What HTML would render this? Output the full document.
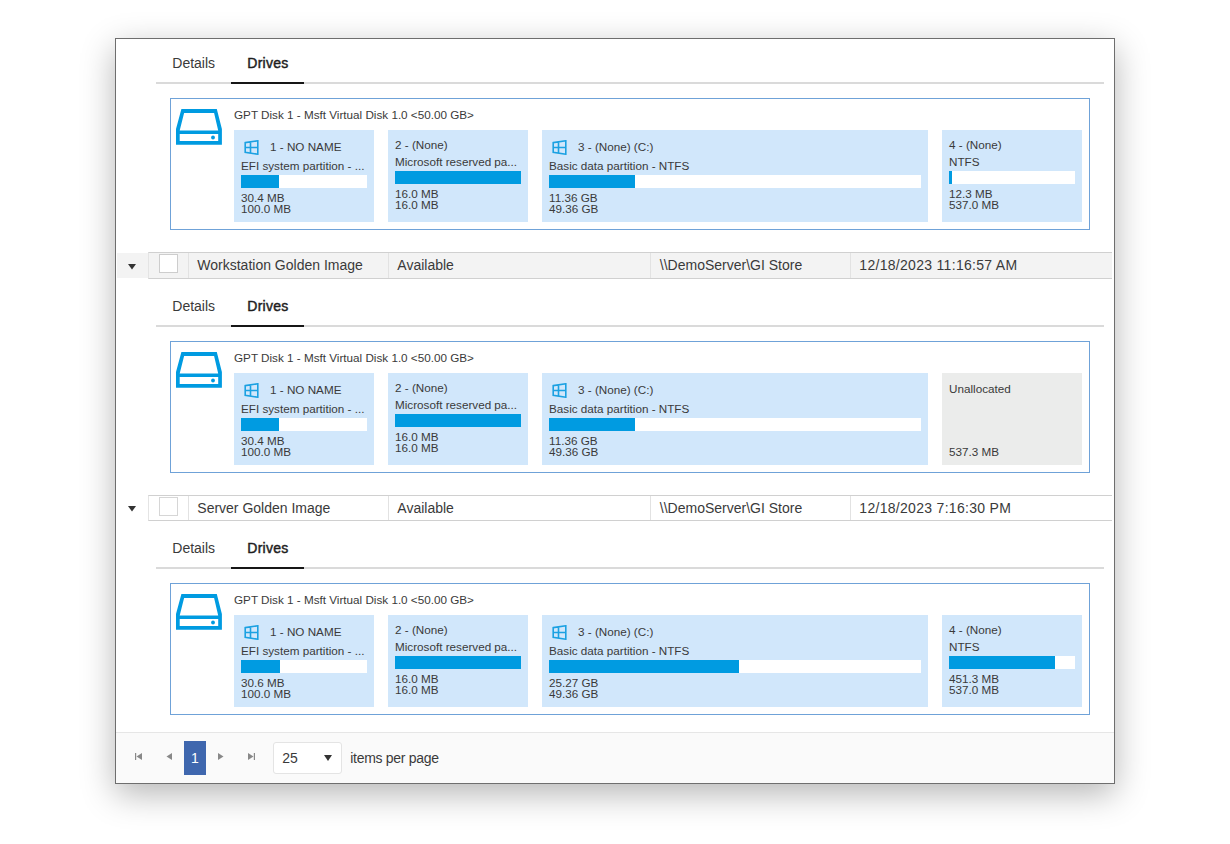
<!DOCTYPE html>
<html><head><meta charset="utf-8"><style>
html,body{margin:0;padding:0;background:#fff;width:1230px;height:844px;overflow:hidden;position:relative}
body{font-family:"Liberation Sans",sans-serif;color:#3a3a3a}
.a{position:absolute;box-sizing:content-box}
.t{position:absolute;height:0;line-height:0;white-space:pre}
.t span{display:inline-block;line-height:0;vertical-align:baseline}
.win{left:115px;top:38px;width:998px;height:744px;border:1px solid #6e6e6e;background:#fff;box-shadow:0 10px 32px rgba(0,0,0,.29)}
</style></head><body>
<div class="a win"></div>
<div class="t" style="left:172.3px;top:63px;font-size:14px;color:#3a3a3a;font-weight:normal;"><span>Details</span></div>
<div class="t" style="left:247.3px;top:63px;font-size:14px;color:#1e1e1e;font-weight:normal;-webkit-text-stroke:0.45px #1e1e1e;letter-spacing:0.25px"><span>Drives</span></div>
<div class="a" style="left:156px;top:82px;width:948px;height:2px;background:#dadada"></div>
<div class="a" style="left:231px;top:82px;width:73px;height:2px;background:#161616"></div>
<div class="a" style="left:170px;top:98px;width:918px;height:130px;border:1px solid #6fa2d8"></div>
<svg class="a" style="left:176px;top:109px" width="46" height="36" viewBox="0 0 46 36"><path fill-rule="evenodd" fill="#009be1" d="M5.4 0H40.8L45.9 20V35.8H0V20Z M8.1 4H38.1L42.2 21.4H3.7Z M3.7 25H42.2V32H3.7Z"/><circle cx="37" cy="28.5" r="1.9" fill="#009be1"/></svg>
<div class="t" style="left:234px;top:115px;font-size:11.7px;color:#3a3a3a;font-weight:normal;"><span>GPT Disk 1 - Msft Virtual Disk 1.0 &lt;50.00 GB&gt;</span></div>
<div class="a" style="left:234px;top:130px;width:140px;height:92px;background:#d1e7fb"></div>
<svg class="a" style="left:244px;top:140px" width="15" height="15" viewBox="0 0 15 15"><path d="M1.2 2.6 L13.8 0.8 L13.8 14.2 L1.2 12.4 Z M1.2 7.5 H13.8 M6.5 1.8 V13.2" fill="none" stroke="#1ba1e2" stroke-width="1.6"/></svg>
<div class="t" style="left:270px;top:147px;font-size:11.7px;color:#3a3a3a;font-weight:normal;"><span>1 - NO NAME</span></div>
<div class="t" style="left:241px;top:166px;font-size:11.7px;color:#3a3a3a;font-weight:normal;"><span>EFI system partition - ...</span></div>
<div class="a" style="left:241px;top:175px;width:126px;height:13px;background:#fff"></div>
<div class="a" style="left:241px;top:175px;width:38px;height:13px;background:#009be1"></div>
<div class="t" style="left:241px;top:198px;font-size:11.7px;color:#3a3a3a;font-weight:normal;"><span>30.4 MB</span></div>
<div class="t" style="left:241px;top:209px;font-size:11.7px;color:#3a3a3a;font-weight:normal;"><span>100.0 MB</span></div>
<div class="a" style="left:388px;top:130px;width:140px;height:92px;background:#d1e7fb"></div>
<div class="t" style="left:395px;top:145px;font-size:11.7px;color:#3a3a3a;font-weight:normal;"><span>2 - (None)</span></div>
<div class="t" style="left:395px;top:162px;font-size:11.7px;color:#3a3a3a;font-weight:normal;"><span>Microsoft reserved pa...</span></div>
<div class="a" style="left:395px;top:171px;width:126px;height:13px;background:#fff"></div>
<div class="a" style="left:395px;top:171px;width:126px;height:13px;background:#009be1"></div>
<div class="t" style="left:395px;top:194px;font-size:11.7px;color:#3a3a3a;font-weight:normal;"><span>16.0 MB</span></div>
<div class="t" style="left:395px;top:205px;font-size:11.7px;color:#3a3a3a;font-weight:normal;"><span>16.0 MB</span></div>
<div class="a" style="left:542px;top:130px;width:386px;height:92px;background:#d1e7fb"></div>
<svg class="a" style="left:552px;top:140px" width="15" height="15" viewBox="0 0 15 15"><path d="M1.2 2.6 L13.8 0.8 L13.8 14.2 L1.2 12.4 Z M1.2 7.5 H13.8 M6.5 1.8 V13.2" fill="none" stroke="#1ba1e2" stroke-width="1.6"/></svg>
<div class="t" style="left:578px;top:147px;font-size:11.7px;color:#3a3a3a;font-weight:normal;"><span>3 - (None) (C:)</span></div>
<div class="t" style="left:549px;top:166px;font-size:11.7px;color:#3a3a3a;font-weight:normal;"><span>Basic data partition - NTFS</span></div>
<div class="a" style="left:549px;top:175px;width:372px;height:13px;background:#fff"></div>
<div class="a" style="left:549px;top:175px;width:86px;height:13px;background:#009be1"></div>
<div class="t" style="left:549px;top:198px;font-size:11.7px;color:#3a3a3a;font-weight:normal;"><span>11.36 GB</span></div>
<div class="t" style="left:549px;top:209px;font-size:11.7px;color:#3a3a3a;font-weight:normal;"><span>49.36 GB</span></div>
<div class="a" style="left:942px;top:130px;width:140px;height:92px;background:#d1e7fb"></div>
<div class="t" style="left:949px;top:145px;font-size:11.7px;color:#3a3a3a;font-weight:normal;"><span>4 - (None)</span></div>
<div class="t" style="left:949px;top:162px;font-size:11.7px;color:#3a3a3a;font-weight:normal;"><span>NTFS</span></div>
<div class="a" style="left:949px;top:171px;width:126px;height:13px;background:#fff"></div>
<div class="a" style="left:949px;top:171px;width:3px;height:13px;background:#009be1"></div>
<div class="t" style="left:949px;top:194px;font-size:11.7px;color:#3a3a3a;font-weight:normal;"><span>12.3 MB</span></div>
<div class="t" style="left:949px;top:205px;font-size:11.7px;color:#3a3a3a;font-weight:normal;"><span>537.0 MB</span></div>
<div class="a" style="left:117px;top:253px;width:995px;height:25px;background:#f3f3f3"></div>
<div class="a" style="left:148px;top:252px;width:963px;height:25px;border-top:1px solid #d0d0d0;border-bottom:1px solid #d0d0d0;border-left:1px solid #e4e4e4"></div>
<div class="a" style="left:188px;top:253px;width:1px;height:25px;background:#e2e2e2"></div>
<div class="a" style="left:388px;top:253px;width:1px;height:25px;background:#e2e2e2"></div>
<div class="a" style="left:650px;top:253px;width:1px;height:25px;background:#e2e2e2"></div>
<div class="a" style="left:850px;top:253px;width:1px;height:25px;background:#e2e2e2"></div>
<div class="a" style="left:159px;top:254px;width:17px;height:17px;background:#fff;border:1px solid #cdcdcd"></div>
<svg class="a" style="left:128px;top:264px" width="8" height="6" viewBox="0 0 8 6"><path d="M0 0H8L4 5.6Z" fill="#333"/></svg>
<div class="t" style="left:197.3px;top:265px;font-size:14px;color:#3a3a3a;font-weight:normal;"><span>Workstation Golden Image</span></div>
<div class="t" style="left:397.3px;top:265px;font-size:14px;color:#3a3a3a;font-weight:normal;"><span>Available</span></div>
<div class="t" style="left:659.8px;top:265px;font-size:14px;color:#3a3a3a;font-weight:normal;"><span>\\DemoServer\GI Store</span></div>
<div class="t" style="left:859.3px;top:265px;font-size:14px;color:#3a3a3a;font-weight:normal;letter-spacing:0.3px"><span>12/18/2023 11:16:57 AM</span></div>
<div class="t" style="left:172.3px;top:306px;font-size:14px;color:#3a3a3a;font-weight:normal;"><span>Details</span></div>
<div class="t" style="left:247.3px;top:306px;font-size:14px;color:#1e1e1e;font-weight:normal;-webkit-text-stroke:0.45px #1e1e1e;letter-spacing:0.25px"><span>Drives</span></div>
<div class="a" style="left:156px;top:325px;width:948px;height:2px;background:#dadada"></div>
<div class="a" style="left:231px;top:325px;width:73px;height:2px;background:#161616"></div>
<div class="a" style="left:170px;top:341px;width:918px;height:130px;border:1px solid #6fa2d8"></div>
<svg class="a" style="left:176px;top:352px" width="46" height="36" viewBox="0 0 46 36"><path fill-rule="evenodd" fill="#009be1" d="M5.4 0H40.8L45.9 20V35.8H0V20Z M8.1 4H38.1L42.2 21.4H3.7Z M3.7 25H42.2V32H3.7Z"/><circle cx="37" cy="28.5" r="1.9" fill="#009be1"/></svg>
<div class="t" style="left:234px;top:358px;font-size:11.7px;color:#3a3a3a;font-weight:normal;"><span>GPT Disk 1 - Msft Virtual Disk 1.0 &lt;50.00 GB&gt;</span></div>
<div class="a" style="left:234px;top:373px;width:140px;height:92px;background:#d1e7fb"></div>
<svg class="a" style="left:244px;top:383px" width="15" height="15" viewBox="0 0 15 15"><path d="M1.2 2.6 L13.8 0.8 L13.8 14.2 L1.2 12.4 Z M1.2 7.5 H13.8 M6.5 1.8 V13.2" fill="none" stroke="#1ba1e2" stroke-width="1.6"/></svg>
<div class="t" style="left:270px;top:390px;font-size:11.7px;color:#3a3a3a;font-weight:normal;"><span>1 - NO NAME</span></div>
<div class="t" style="left:241px;top:409px;font-size:11.7px;color:#3a3a3a;font-weight:normal;"><span>EFI system partition - ...</span></div>
<div class="a" style="left:241px;top:418px;width:126px;height:13px;background:#fff"></div>
<div class="a" style="left:241px;top:418px;width:38px;height:13px;background:#009be1"></div>
<div class="t" style="left:241px;top:441px;font-size:11.7px;color:#3a3a3a;font-weight:normal;"><span>30.4 MB</span></div>
<div class="t" style="left:241px;top:452px;font-size:11.7px;color:#3a3a3a;font-weight:normal;"><span>100.0 MB</span></div>
<div class="a" style="left:388px;top:373px;width:140px;height:92px;background:#d1e7fb"></div>
<div class="t" style="left:395px;top:388px;font-size:11.7px;color:#3a3a3a;font-weight:normal;"><span>2 - (None)</span></div>
<div class="t" style="left:395px;top:405px;font-size:11.7px;color:#3a3a3a;font-weight:normal;"><span>Microsoft reserved pa...</span></div>
<div class="a" style="left:395px;top:414px;width:126px;height:13px;background:#fff"></div>
<div class="a" style="left:395px;top:414px;width:126px;height:13px;background:#009be1"></div>
<div class="t" style="left:395px;top:437px;font-size:11.7px;color:#3a3a3a;font-weight:normal;"><span>16.0 MB</span></div>
<div class="t" style="left:395px;top:448px;font-size:11.7px;color:#3a3a3a;font-weight:normal;"><span>16.0 MB</span></div>
<div class="a" style="left:542px;top:373px;width:386px;height:92px;background:#d1e7fb"></div>
<svg class="a" style="left:552px;top:383px" width="15" height="15" viewBox="0 0 15 15"><path d="M1.2 2.6 L13.8 0.8 L13.8 14.2 L1.2 12.4 Z M1.2 7.5 H13.8 M6.5 1.8 V13.2" fill="none" stroke="#1ba1e2" stroke-width="1.6"/></svg>
<div class="t" style="left:578px;top:390px;font-size:11.7px;color:#3a3a3a;font-weight:normal;"><span>3 - (None) (C:)</span></div>
<div class="t" style="left:549px;top:409px;font-size:11.7px;color:#3a3a3a;font-weight:normal;"><span>Basic data partition - NTFS</span></div>
<div class="a" style="left:549px;top:418px;width:372px;height:13px;background:#fff"></div>
<div class="a" style="left:549px;top:418px;width:86px;height:13px;background:#009be1"></div>
<div class="t" style="left:549px;top:441px;font-size:11.7px;color:#3a3a3a;font-weight:normal;"><span>11.36 GB</span></div>
<div class="t" style="left:549px;top:452px;font-size:11.7px;color:#3a3a3a;font-weight:normal;"><span>49.36 GB</span></div>
<div class="a" style="left:942px;top:373px;width:140px;height:92px;background:#ebeceb"></div>
<div class="t" style="left:949px;top:389px;font-size:11.7px;color:#3a3a3a;font-weight:normal;"><span>Unallocated</span></div>
<div class="t" style="left:949px;top:452px;font-size:11.7px;color:#3a3a3a;font-weight:normal;"><span>537.3 MB</span></div>
<div class="a" style="left:148px;top:495px;width:963px;height:24px;border-top:1px solid #d0d0d0;border-bottom:1px solid #d0d0d0;border-left:1px solid #e4e4e4"></div>
<div class="a" style="left:188px;top:496px;width:1px;height:24px;background:#e2e2e2"></div>
<div class="a" style="left:388px;top:496px;width:1px;height:24px;background:#e2e2e2"></div>
<div class="a" style="left:650px;top:496px;width:1px;height:24px;background:#e2e2e2"></div>
<div class="a" style="left:850px;top:496px;width:1px;height:24px;background:#e2e2e2"></div>
<div class="a" style="left:159px;top:497px;width:17px;height:17px;background:#fff;border:1px solid #d6d6d6"></div>
<svg class="a" style="left:128px;top:506px" width="8" height="6" viewBox="0 0 8 6"><path d="M0 0H8L4 5.6Z" fill="#333"/></svg>
<div class="t" style="left:197.3px;top:508px;font-size:14px;color:#3a3a3a;font-weight:normal;"><span>Server Golden Image</span></div>
<div class="t" style="left:397.3px;top:508px;font-size:14px;color:#3a3a3a;font-weight:normal;"><span>Available</span></div>
<div class="t" style="left:659.8px;top:508px;font-size:14px;color:#3a3a3a;font-weight:normal;"><span>\\DemoServer\GI Store</span></div>
<div class="t" style="left:859.3px;top:508px;font-size:14px;color:#3a3a3a;font-weight:normal;letter-spacing:0.3px"><span>12/18/2023 7:16:30 PM</span></div>
<div class="t" style="left:172.3px;top:548px;font-size:14px;color:#3a3a3a;font-weight:normal;"><span>Details</span></div>
<div class="t" style="left:247.3px;top:548px;font-size:14px;color:#1e1e1e;font-weight:normal;-webkit-text-stroke:0.45px #1e1e1e;letter-spacing:0.25px"><span>Drives</span></div>
<div class="a" style="left:156px;top:567px;width:948px;height:2px;background:#dadada"></div>
<div class="a" style="left:231px;top:567px;width:73px;height:2px;background:#161616"></div>
<div class="a" style="left:170px;top:583px;width:918px;height:130px;border:1px solid #6fa2d8"></div>
<svg class="a" style="left:176px;top:594px" width="46" height="36" viewBox="0 0 46 36"><path fill-rule="evenodd" fill="#009be1" d="M5.4 0H40.8L45.9 20V35.8H0V20Z M8.1 4H38.1L42.2 21.4H3.7Z M3.7 25H42.2V32H3.7Z"/><circle cx="37" cy="28.5" r="1.9" fill="#009be1"/></svg>
<div class="t" style="left:234px;top:600px;font-size:11.7px;color:#3a3a3a;font-weight:normal;"><span>GPT Disk 1 - Msft Virtual Disk 1.0 &lt;50.00 GB&gt;</span></div>
<div class="a" style="left:234px;top:615px;width:140px;height:92px;background:#d1e7fb"></div>
<svg class="a" style="left:244px;top:625px" width="15" height="15" viewBox="0 0 15 15"><path d="M1.2 2.6 L13.8 0.8 L13.8 14.2 L1.2 12.4 Z M1.2 7.5 H13.8 M6.5 1.8 V13.2" fill="none" stroke="#1ba1e2" stroke-width="1.6"/></svg>
<div class="t" style="left:270px;top:632px;font-size:11.7px;color:#3a3a3a;font-weight:normal;"><span>1 - NO NAME</span></div>
<div class="t" style="left:241px;top:651px;font-size:11.7px;color:#3a3a3a;font-weight:normal;"><span>EFI system partition - ...</span></div>
<div class="a" style="left:241px;top:660px;width:126px;height:13px;background:#fff"></div>
<div class="a" style="left:241px;top:660px;width:39px;height:13px;background:#009be1"></div>
<div class="t" style="left:241px;top:683px;font-size:11.7px;color:#3a3a3a;font-weight:normal;"><span>30.6 MB</span></div>
<div class="t" style="left:241px;top:694px;font-size:11.7px;color:#3a3a3a;font-weight:normal;"><span>100.0 MB</span></div>
<div class="a" style="left:388px;top:615px;width:140px;height:92px;background:#d1e7fb"></div>
<div class="t" style="left:395px;top:630px;font-size:11.7px;color:#3a3a3a;font-weight:normal;"><span>2 - (None)</span></div>
<div class="t" style="left:395px;top:647px;font-size:11.7px;color:#3a3a3a;font-weight:normal;"><span>Microsoft reserved pa...</span></div>
<div class="a" style="left:395px;top:656px;width:126px;height:13px;background:#fff"></div>
<div class="a" style="left:395px;top:656px;width:126px;height:13px;background:#009be1"></div>
<div class="t" style="left:395px;top:679px;font-size:11.7px;color:#3a3a3a;font-weight:normal;"><span>16.0 MB</span></div>
<div class="t" style="left:395px;top:690px;font-size:11.7px;color:#3a3a3a;font-weight:normal;"><span>16.0 MB</span></div>
<div class="a" style="left:542px;top:615px;width:386px;height:92px;background:#d1e7fb"></div>
<svg class="a" style="left:552px;top:625px" width="15" height="15" viewBox="0 0 15 15"><path d="M1.2 2.6 L13.8 0.8 L13.8 14.2 L1.2 12.4 Z M1.2 7.5 H13.8 M6.5 1.8 V13.2" fill="none" stroke="#1ba1e2" stroke-width="1.6"/></svg>
<div class="t" style="left:578px;top:632px;font-size:11.7px;color:#3a3a3a;font-weight:normal;"><span>3 - (None) (C:)</span></div>
<div class="t" style="left:549px;top:651px;font-size:11.7px;color:#3a3a3a;font-weight:normal;"><span>Basic data partition - NTFS</span></div>
<div class="a" style="left:549px;top:660px;width:372px;height:13px;background:#fff"></div>
<div class="a" style="left:549px;top:660px;width:190px;height:13px;background:#009be1"></div>
<div class="t" style="left:549px;top:683px;font-size:11.7px;color:#3a3a3a;font-weight:normal;"><span>25.27 GB</span></div>
<div class="t" style="left:549px;top:694px;font-size:11.7px;color:#3a3a3a;font-weight:normal;"><span>49.36 GB</span></div>
<div class="a" style="left:942px;top:615px;width:140px;height:92px;background:#d1e7fb"></div>
<div class="t" style="left:949px;top:630px;font-size:11.7px;color:#3a3a3a;font-weight:normal;"><span>4 - (None)</span></div>
<div class="t" style="left:949px;top:647px;font-size:11.7px;color:#3a3a3a;font-weight:normal;"><span>NTFS</span></div>
<div class="a" style="left:949px;top:656px;width:126px;height:13px;background:#fff"></div>
<div class="a" style="left:949px;top:656px;width:106px;height:13px;background:#009be1"></div>
<div class="t" style="left:949px;top:679px;font-size:11.7px;color:#3a3a3a;font-weight:normal;"><span>451.3 MB</span></div>
<div class="t" style="left:949px;top:690px;font-size:11.7px;color:#3a3a3a;font-weight:normal;"><span>537.0 MB</span></div>
<div class="a" style="left:116px;top:732px;width:998px;height:51px;background:#fafafa;border-top:1px solid #e6e6e6;box-sizing:border-box"></div>
<svg class="a" style="left:135px;top:753px" width="8" height="7" viewBox="0 0 8 7"><path d="M7 0V7L1.5 3.5Z" fill="#888"/><rect x="0" y="0" width="1.2" height="7" fill="#888"/></svg>
<svg class="a" style="left:165px;top:753px" width="8" height="7" viewBox="0 0 8 7"><path d="M7 0V7L1.5 3.5Z" fill="#888"/></svg>
<div class="a" style="left:184px;top:741px;width:22px;height:34px;background:#3f67ae"></div>
<div class="t" style="left:191.0px;top:758px;font-size:14px;color:#fff;font-weight:normal;"><span>1</span></div>
<svg class="a" style="left:217px;top:753px" width="8" height="7" viewBox="0 0 8 7"><path d="M1 0V7L6.5 3.5Z" fill="#888"/></svg>
<svg class="a" style="left:247px;top:753px" width="8" height="7" viewBox="0 0 8 7"><path d="M1 0V7L6.5 3.5Z" fill="#888"/><rect x="6.8" y="0" width="1.2" height="7" fill="#888"/></svg>
<div class="a" style="left:273px;top:742px;width:69px;height:32px;background:#fff;border:1px solid #e4e4e4;border-radius:3px;box-sizing:border-box"></div>
<div class="t" style="left:282.3px;top:758px;font-size:14px;color:#3a3a3a;font-weight:normal;"><span>25</span></div>
<svg class="a" style="left:324px;top:755px" width="8" height="6" viewBox="0 0 8 6"><path d="M0 0H8L4 6Z" fill="#333"/></svg>
<div class="t" style="left:350.3px;top:758px;font-size:14px;color:#3a3a3a;font-weight:normal;letter-spacing:-0.3px"><span>items per page</span></div>
</body></html>
